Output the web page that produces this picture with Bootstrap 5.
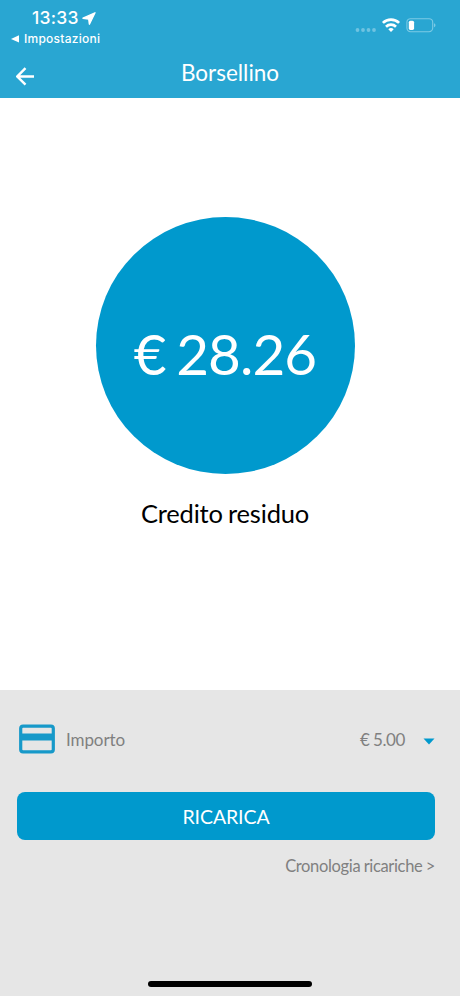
<!DOCTYPE html>
<html lang="it">
<head>
<meta charset="utf-8">
<meta name="viewport" content="width=device-width, initial-scale=1">
<title>Borsellino</title>
<link href="https://cdn.jsdelivr.net/npm/bootstrap@5.3.0/dist/css/bootstrap.min.css" rel="stylesheet">
<style>
  body { font-family: Lato, sans-serif; height: 996px; overflow: hidden; }
  svg { display: block; flex: none; }
  .app-header { background: #29a6d2; height: 98px; }
  .status { height: 48px; font-family: Inter, sans-serif; padding: 8px 24px 0 11px; }
  .clock { font-size: 17.5px; font-weight: 500; line-height: 20px; padding-left: 21px; gap: 3px; letter-spacing: .25px; }
  .back-app { font-size: 12px; font-weight: 500; line-height: 16px; letter-spacing: .25px; gap: 5px; margin-top: 3px; }
  .indicators { height: 20px; margin-top: 7px; }
  .titlebar { height: 50px; display: grid; grid-template-columns: 50px 1fr 50px; }
  .titlebar h1 { font-size: 22.5px; line-height: 26px; padding-top: 12px; }
  .balance { height: 592px; padding: 119px 10px 0 0; }
  .disc { width: 259px; height: 257px; background: #0099cd; }
  .amount { font-size: 56.5px; line-height: 60px; padding-top: 14px; letter-spacing: -.9px; word-spacing: -3px; }
  .caption { font-size: 25.5px; line-height: 30px; margin-top: 24px; letter-spacing: -.2px; word-spacing: -1px; }
  .topup { background: #e6e6e6; color: #808080; height: 306px; padding: 29px 25px 0 17px; font-size: 17px; }
  .method { height: 40px; }
  .method-label { margin-left: 9px; padding-top: 1px; letter-spacing: -.1px; }
  .method-value { letter-spacing: -.4px; word-spacing: -.5px; padding-top: 1px; margin-right: 18px; }
  .btn-topup { --bs-btn-color: #fff; --bs-btn-bg: #0099cd; --bs-btn-hover-bg: #008abb; --bs-btn-hover-color: #fff; height: 48px; border: 0; border-radius: 8px; font-size: 19.5px; margin-top: 33px; padding: 2px 0 0; letter-spacing: -.1px; }
  .history { font-size: 16.5px; line-height: 20px; margin-top: 16px; color: #808080; letter-spacing: -.34px; word-spacing: -.5px; }
  .home-bar { width: 164px; height: 6px; border-radius: 3px; background: #000; margin: auto 0 9px 8px; }
</style>
</head>
<body class="bg-white">
<header class="app-header text-white">
  <div class="status d-flex justify-content-between align-items-start">
    <div>
      <div class="clock d-flex align-items-center">
        <span>13:33</span>
        <svg width="14" height="13" viewBox="0 0 14 13" fill="#fff"><path d="M13 .8 7.4 12.2 6.7 7 1 6.2z" stroke="#fff" stroke-width="1.4" stroke-linejoin="round"/></svg>
      </div>
      <div class="back-app d-flex align-items-center">
        <svg width="8" height="8" viewBox="0 0 8 8" fill="#fff"><path d="M8 .3v7.2L0 3.9z"/></svg>
        <span>Impostazioni</span>
      </div>
    </div>
    <div class="indicators d-flex align-items-start">
      <svg width="81" height="20" viewBox="355 15 81 20">
        <g fill="#6fc3e1"><circle cx="357.5" cy="30" r="1.9"/><circle cx="363" cy="30" r="1.9"/><circle cx="368.5" cy="30" r="1.9"/><circle cx="374" cy="30" r="1.9"/></g>
        <g fill="none" stroke="#fff" stroke-width="2.7"><path d="M382.9 22.9a11.6 11.6 0 0 1 16.2 0"/><path d="M386 26.7a7.1 7.1 0 0 1 10 0"/></g>
        <path d="M391 31.9l-2.7-2.7a3.9 3.9 0 0 1 5.4 0z" fill="#fff"/>
        <rect x="406.9" y="18.7" width="25.8" height="13" rx="3.6" fill="none" stroke="#7ccae5" stroke-width="1.1"/>
        <rect x="408.8" y="20.7" width="5.3" height="9.2" rx="1.6" fill="#fff"/>
        <path d="M434 23.2c2 .7 2 3.3 0 4z" fill="#7ccae5"/>
      </svg>
    </div>
  </div>
  <div class="titlebar text-center">
    <a href="#" class="d-flex ps-3 pt-2" aria-label="Indietro">
      <svg class="mt-2" width="19" height="26" viewBox="0 0 19 26" fill="none" stroke="#fff" stroke-width="2.4"><path d="M18 12.5H1.8M9.5 4.2 1.3 12.5l8.2 8.2"/></svg>
    </a>
    <h1 class="fw-normal m-0">Borsellino</h1>
  </div>
</header>
<main>
  <section class="balance d-flex flex-column align-items-center">
    <div class="disc rounded-circle d-flex align-items-center justify-content-center text-white">
      <span class="amount">€ 28.26</span>
    </div>
    <div class="caption text-black">Credito residuo</div>
  </section>
  <section class="topup d-flex flex-column">
    <div class="method d-flex align-items-center">
      <svg width="40" height="40" viewBox="0 0 40 40" fill="none" stroke="#1799c9"><rect x="3.7" y="7.2" width="32.6" height="25.6" rx="2.4" stroke-width="3.2"/><path d="M3.5 18h33" stroke-width="7"/></svg>
      <span class="method-label me-auto">Importo</span>
      <span class="method-value">€ 5.00</span>
      <svg class="mt-1" width="12" height="7" viewBox="0 0 12 7" fill="#0099cd"><path d="M.5.5h11L6 6.5z"/></svg>
    </div>
    <button type="button" class="btn btn-topup w-100">RICARICA</button>
    <a href="#" class="history text-decoration-none align-self-end">Cronologia ricariche &gt;</a>
    <div class="home-bar align-self-center"></div>
  </section>
</main>
<script src="https://cdn.jsdelivr.net/npm/bootstrap@5.3.0/dist/js/bootstrap.bundle.min.js"></script>
</body>
</html>
